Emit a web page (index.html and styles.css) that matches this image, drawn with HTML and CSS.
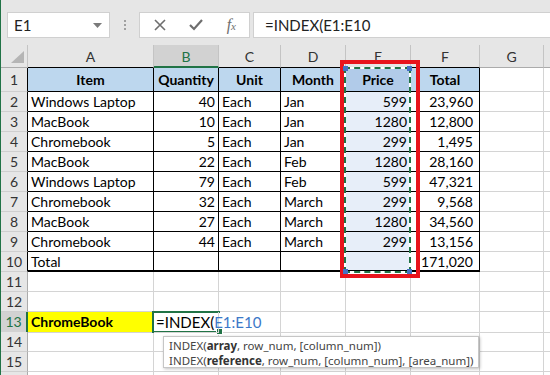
FILE: index.html
```html
<!DOCTYPE html>
<html>
<head>
    <title>INDEX formula</title>
    <link rel="stylesheet" href="styles.css">
</head>
<body>
    <div class="app">
        <div class="formula-bar">
            <div class="name-box">
                <span>E1</span>
                <svg width="9" height="5" viewBox="0 0 9 5"><polygon points="0,0 9,0 4.5,5" fill="#7a7a7a"/></svg>
            </div>
            <div class="grip">
                <svg width="3" height="12" viewBox="0 0 3 12"><rect x="1" y="1" width="2" height="2" fill="#a0a0a0"/><rect x="1" y="5" width="2" height="2" fill="#a0a0a0"/><rect x="1" y="9" width="2" height="2" fill="#a0a0a0"/></svg>
            </div>
            <div class="fx-buttons">
                <svg width="12" height="12" viewBox="0 0 12 12"><path d="M1 1 L11 11 M11 1 L1 11" stroke="#6e6e6e" stroke-width="1.6"/></svg>
                <svg width="14" height="12" viewBox="0 0 14 12"><path d="M1 6 L5 10 L13 1" stroke="#6e6e6e" stroke-width="2.2" fill="none"/></svg>
                <span class="fx">f<small>x</small></span>
            </div>
            <div class="formula-input">=INDEX(E1:E10</div>
        </div>

        <div class="sheet">
            <div class="row hdr">
                <div class="corner"><svg width="14" height="12" viewBox="0 0 14 12"><polygon points="13,0 13,12 0,12" fill="#b5b5b5"/></svg></div>
                <div class="tb">A</div><div class="sel">B</div><div class="tb">C</div><div class="tb">D</div><div class="tb">E</div><div class="tb">F</div><div>G</div><div></div>
            </div>
            <div class="row first">
                <div class="rh tb">1</div>
                <div class="t h">Item</div><div class="t h">Quantity</div><div class="t h">Unit</div><div class="t h">Month</div><div class="t h eh">Price</div><div class="t h">Total</div><div></div><div></div>
            </div>
            <div class="row">
                <div class="rh tb">2</div>
                <div class="t">Windows Laptop</div><div class="t n">40</div><div class="t">Each</div><div class="t">Jan</div><div class="t n e">599</div><div class="t n f">23,960</div><div></div><div></div>
            </div>
            <div class="row">
                <div class="rh tb">3</div>
                <div class="t">MacBook</div><div class="t n">10</div><div class="t">Each</div><div class="t">Jan</div><div class="t n e">1280</div><div class="t n f">12,800</div><div></div><div></div>
            </div>
            <div class="row">
                <div class="rh tb">4</div>
                <div class="t">Chromebook</div><div class="t n">5</div><div class="t">Each</div><div class="t">Jan</div><div class="t n e">299</div><div class="t n f">1,495</div><div></div><div></div>
            </div>
            <div class="row">
                <div class="rh tb">5</div>
                <div class="t">MacBook</div><div class="t n">22</div><div class="t">Each</div><div class="t">Feb</div><div class="t n e">1280</div><div class="t n f">28,160</div><div></div><div></div>
            </div>
            <div class="row">
                <div class="rh tb">6</div>
                <div class="t">Windows Laptop</div><div class="t n">79</div><div class="t">Each</div><div class="t">Feb</div><div class="t n e">599</div><div class="t n f">47,321</div><div></div><div></div>
            </div>
            <div class="row">
                <div class="rh tb">7</div>
                <div class="t">Chromebook</div><div class="t n">32</div><div class="t">Each</div><div class="t">March</div><div class="t n e">299</div><div class="t n f">9,568</div><div></div><div></div>
            </div>
            <div class="row">
                <div class="rh tb">8</div>
                <div class="t">MacBook</div><div class="t n">27</div><div class="t">Each</div><div class="t">March</div><div class="t n e">1280</div><div class="t n f">34,560</div><div></div><div></div>
            </div>
            <div class="row">
                <div class="rh tb">9</div>
                <div class="t">Chromebook</div><div class="t n">44</div><div class="t">Each</div><div class="t">March</div><div class="t n e">299</div><div class="t n f">13,156</div><div></div><div></div>
            </div>
            <div class="row total">
                <div class="rh tb">10</div>
                <div class="t">Total</div><div class="t"></div><div class="t"></div><div class="t"></div><div class="t e"></div><div class="t n f">171,020</div><div></div><div></div>
            </div>
            <div class="row">
                <div class="rh">11</div>
                <div></div><div></div><div></div><div></div><div></div><div></div><div></div><div></div>
            </div>
            <div class="row">
                <div class="rh">12</div>
                <div></div><div></div><div></div><div></div><div></div><div></div><div></div><div></div>
            </div>
            <div class="row">
                <div class="rh active">13</div>
                <div class="yellow">ChromeBook</div><div class="editing">=INDEX(<span class="ref">E1:E10</span></div><div></div><div></div><div></div><div></div><div></div><div></div>
            </div>
            <div class="row">
                <div class="rh">14</div>
                <div></div><div></div><div></div><div></div><div></div><div></div><div></div><div></div>
            </div>
            <div class="row">
                <div class="rh">15</div>
                <div></div><div></div><div></div><div></div><div></div><div></div><div></div><div></div>
            </div>
            <div class="row">
                <div class="rh"></div>
                <div></div><div></div><div></div><div></div><div></div><div></div><div></div><div></div>
            </div>

            <!-- overlays on top of the grid -->
            <div class="red-box"></div>
            <div class="ants">
                <span class="handle tl"></span><span class="handle tr"></span>
                <span class="handle bl"></span><span class="handle br"></span>
            </div>
            <div class="active-cell"><span class="fill-handle"></span></div>
            <div class="tooltip">
                <div>INDEX(<b>array</b>, row_num, [column_num])</div>
                <div>INDEX(<b>reference</b>, row_num, [column_num], [area_num])</div>
            </div>
        </div>
    </div>
</body>
</html>
```

FILE: styles.css
```css
body {
    margin: 0;
    font-family: Lato, "Liberation Sans", sans-serif;
    font-size: 14px;
    background: #fff;
}
.app {
    width: 550px;
    height: 375px;
    overflow: hidden;
    border-left: 1px solid #217346;
    box-sizing: border-box;
}
.formula-bar {
    height: 45px;
    background: #e6e6e6;
    display: flex;
    align-items: flex-start;
    padding: 12px 0 0 6px;
    box-sizing: border-box;
}
.name-box {
    width: 103px;
    height: 26px;
    box-sizing: border-box;
    background: #fff;
    border: 1px solid #d0d0d0;
    display: flex;
    align-items: center;
    justify-content: space-between;
    padding: 0 7px 0 6px;
    color: #222;
    font-size: 15px;
}
.grip {
    width: 29px;
    height: 26px;
    display: flex;
    align-items: center;
    justify-content: center;
}
.fx-buttons {
    width: 111px;
    height: 26px;
    box-sizing: border-box;
    background: #fff;
    border: 1px solid #d0d0d0;
    display: flex;
    align-items: center;
    justify-content: space-between;
    padding: 0 13px 0 14px;
}
.fx {
    font-family: "Liberation Serif", serif;
    font-style: italic;
    font-size: 16px;
    color: #6e6e6e;
}
.fx small {
    font-size: 11px;
}
.formula-input {
    flex: 1;
    margin-left: 3px;
    height: 26px;
    box-sizing: border-box;
    background: #fff;
    border: 1px solid #d0d0d0;
    border-right: none;
    padding-left: 11px;
    line-height: 24px;
    color: #222;
    font-size: 15px;
}
.sheet {
    position: relative;
}
.row {
    display: grid;
    grid-template-columns: 27px 126px 65px 62px 65px 65px 69px 64px 1fr;
    height: 20px;
}
.row > div {
    box-sizing: border-box;
    border-right: 1px solid #d4d4d4;
    border-bottom: 1px solid #d4d4d4;
    padding: 0 3px;
    line-height: 20px;
    white-space: nowrap;
    overflow: hidden;
    color: #000;
}
.hdr {
    height: 23px;
}
.hdr > div {
    background: #e6e6e6;
    border-right-color: #c4c4c4;
    border-bottom-color: #ababab;
    text-align: center;
    line-height: 23px;
    color: #333;
}
.hdr > div.tb {
    border-bottom-color: #000;
}
.hdr > div.sel {
    background: #d2d2d2;
    border-bottom: 2px solid #217346;
    color: #217346;
}
.hdr > .corner {
    display: flex;
    align-items: flex-end;
    justify-content: flex-end;
    padding: 0 2px 4px 0;
}
.first {
    height: 24px;
}
.first > div {
    line-height: 24px;
}
.row > .rh {
    background: #e6e6e6;
    border-right-color: #ababab;
    border-bottom-color: #cfcfcf;
    text-align: center;
    padding: 0;
    color: #333;
}
.row > .rh.tb {
    border-right-color: #000;
}
.row > .rh.active {
    background: #d2d2d2;
    border-right: 2px solid #217346;
    color: #217346;
}
.row > .t {
    border-right-color: #000;
    border-bottom-color: #000;
}
.row > .h {
    background: #bdd7ee;
    font-weight: bold;
    text-align: center;
}
.row > .eh {
    background: #b1cbe9;
}
.row > .e {
    background: #e7eef9;
}
.row > .n {
    text-align: right;
}
.row > .f {
    padding-right: 6px;
}
.total > .t {
    border-bottom-width: 2px;
}
.row > .yellow {
    background: #ffff00;
    font-weight: bold;
}
.row > .editing {
    overflow: visible;
    position: relative;
    z-index: 2;
    padding-left: 2px;
    font-size: 15px;
}
.ref {
    color: #3c78c8;
}
.red-box {
    position: absolute;
    left: 339px;
    top: 15px;
    width: 80px;
    height: 218px;
    box-sizing: border-box;
    border: 4px solid #e8141c;
}
.ants {
    position: absolute;
    left: 343px;
    top: 22px;
    width: 67px;
    height: 206px;
    box-sizing: border-box;
    border: 2px solid #fff;
}
.ants::before {
    content: "";
    position: absolute;
    inset: -2px;
    border: 2px dashed #217346;
}
.handle {
    position: absolute;
    width: 5px;
    height: 5px;
    background: #4472c4;
}
.handle.tl { left: -3px; top: -3px; }
.handle.tr { right: -3px; top: -3px; }
.handle.bl { left: -3px; bottom: -3px; }
.handle.br { right: -3px; bottom: -3px; }
.active-cell {
    position: absolute;
    left: 151px;
    top: 266px;
    width: 68px;
    height: 22px;
    box-sizing: border-box;
    border: 2px solid #217346;
    border-right: none;
    z-index: 1;
}
.fill-handle {
    position: absolute;
    right: -3px;
    bottom: -4px;
    width: 5px;
    height: 5px;
    background: #217346;
    border: 1px solid #fff;
}
.tooltip {
    position: absolute;
    left: 162px;
    top: 291px;
    width: 316px;
    height: 32px;
    box-sizing: border-box;
    background: #fff;
    border: 1px solid #c6c6c6;
    box-shadow: 1px 1px 3px rgba(0, 0, 0, 0.25);
    padding: 1px 0 0 5px;
    font-family: "Noto Sans", sans-serif;
    font-size: 11.5px;
    line-height: 15px;
    color: #444;
    z-index: 3;
}
.tooltip b {
    color: #333;
}
```
